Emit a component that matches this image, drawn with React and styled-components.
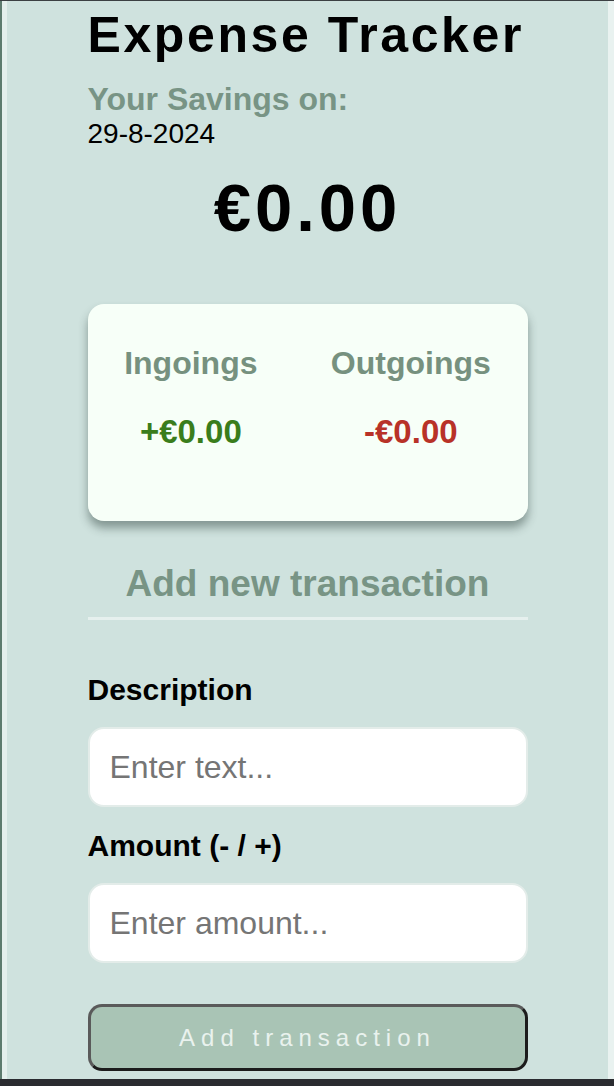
import React, { useState } from "react";
import styled, { createGlobalStyle } from "styled-components";

const GlobalStyles = createGlobalStyle`
  html, body {
    margin: 0;
    padding: 0;
    height: 100%;
    overflow: hidden;
  }
  body {
    font-family: "Liberation Sans", Arial, Helvetica, sans-serif;
    background: #cfe2de;
  }
  #root {
    height: 100%;
  }
`;

const Frame = styled.div`
  height: 100vh;
  display: flex;
  flex-direction: column;
  border-top: 1px solid #3b3f42;
  box-sizing: border-box;
`;

const Window = styled.div`
  flex: 1;
  display: flex;
  min-height: 0;
`;

const LeftEdge = styled.div`
  width: 5px;
  border-left: 2px solid #5d7b6e;
  background: #e4efec;
`;

const RightEdge = styled.div`
  width: 6px;
  background: #e9f2f0;
`;

const BottomBar = styled.div`
  height: 7px;
  background: #2a2b30;
`;

const Main = styled.main`
  flex: 1;
  background: #cfe2de;
  display: flex;
  justify-content: center;
  padding-top: 6px;
`;

const Column = styled.div`
  width: 440px;
  display: flex;
  flex-direction: column;
`;

const Title = styled.h1`
  margin: 0;
  font-size: 50px;
  line-height: 56px;
  font-weight: 700;
  letter-spacing: 2.6px;
  color: #000;
`;

const SavingsLabel = styled.h4`
  margin: 18px 0 0;
  font-size: 32px;
  line-height: 36px;
  font-weight: 700;
  color: #789485;
`;

const DateText = styled.div`
  margin-top: 1px;
  font-size: 28px;
  line-height: 32px;
  color: #000;
`;

const Balance = styled.h2`
  margin: 20px 0 0;
  text-align: center;
  font-size: 67px;
  line-height: 76px;
  font-weight: 700;
  letter-spacing: 4px;
  color: #000;
`;

const Card = styled.div`
  margin-top: 58px;
  background: #f7fff8;
  border-radius: 16px;
  box-shadow: 0 7px 10px rgba(40, 60, 55, 0.45);
  padding: 41px 0 71px;
  display: flex;
  justify-content: space-around;
`;

const Stat = styled.div`
  display: flex;
  flex-direction: column;
  align-items: center;
  gap: 33px;
`;

const StatTitle = styled.h4`
  margin: 0;
  font-size: 32px;
  line-height: 36px;
  font-weight: 700;
  color: #76917f;
`;

const StatValue = styled.p`
  margin: 0;
  font-size: 33px;
  line-height: 36px;
  font-weight: 700;
  color: ${({ $tone }) => ($tone === "plus" ? "#3a7d1c" : "#b83228")};
`;

const SectionTitle = styled.h3`
  margin: 41px 0 0;
  padding-bottom: 11px;
  border-bottom: 3px solid #e6f0ee;
  text-align: center;
  font-size: 37px;
  line-height: 44px;
  font-weight: 700;
  color: #789485;
`;

const Form = styled.form`
  display: flex;
  flex-direction: column;
`;

const Label = styled.label`
  margin-top: ${({ $top }) => $top}px;
  font-size: 30px;
  line-height: 34px;
  font-weight: 700;
  color: #000;
`;

const Input = styled.input`
  margin-top: 20px;
  height: 80px;
  box-sizing: border-box;
  border: 2px solid #e3ece9;
  border-radius: 16px;
  background: #fff;
  padding: 0 20px;
  font-family: inherit;
  font-size: 32px;
  color: #222;
  outline: none;

  &::placeholder {
    color: #757575;
  }
`;

const Button = styled.button`
  margin-top: 41px;
  height: 67px;
  box-sizing: border-box;
  border: 3px solid #5a5a5a;
  border-right-color: #1c1c1c;
  border-bottom-color: #1c1c1c;
  border-radius: 14px;
  background: #a9c4b5;
  color: #e9f2ee;
  font-family: inherit;
  font-size: 24px;
  letter-spacing: 6px;
  cursor: pointer;
`;

const App = () => {
  const [text, setText] = useState("");
  const [amount, setAmount] = useState("");

  const handleSubmit = (e) => {
    e.preventDefault();
  };

  return (
    <>
      <GlobalStyles />
      <Frame>
        <Window>
          <LeftEdge />
          <Main>
            <Column>
              <Title>Expense Tracker</Title>
              <SavingsLabel>Your Savings on:</SavingsLabel>
              <DateText>29-8-2024</DateText>
              <Balance>€0.00</Balance>

              <Card>
                <Stat>
                  <StatTitle>Ingoings</StatTitle>
                  <StatValue $tone="plus">+€0.00</StatValue>
                </Stat>
                <Stat>
                  <StatTitle>Outgoings</StatTitle>
                  <StatValue $tone="minus">-€0.00</StatValue>
                </Stat>
              </Card>

              <SectionTitle>Add new transaction</SectionTitle>
              <Form onSubmit={handleSubmit}>
                <Label $top={53} htmlFor="text">
                  Description
                </Label>
                <Input
                  id="text"
                  type="text"
                  value={text}
                  onChange={(e) => setText(e.target.value)}
                  placeholder="Enter text..."
                />
                <Label $top={22} htmlFor="amount">
                  Amount (- / +)
                </Label>
                <Input
                  id="amount"
                  type="number"
                  value={amount}
                  onChange={(e) => setAmount(e.target.value)}
                  placeholder="Enter amount..."
                />
                <Button type="submit">Add transaction</Button>
              </Form>
            </Column>
          </Main>
          <RightEdge />
        </Window>
        <BottomBar />
      </Frame>
    </>
  );
};

export default App;
